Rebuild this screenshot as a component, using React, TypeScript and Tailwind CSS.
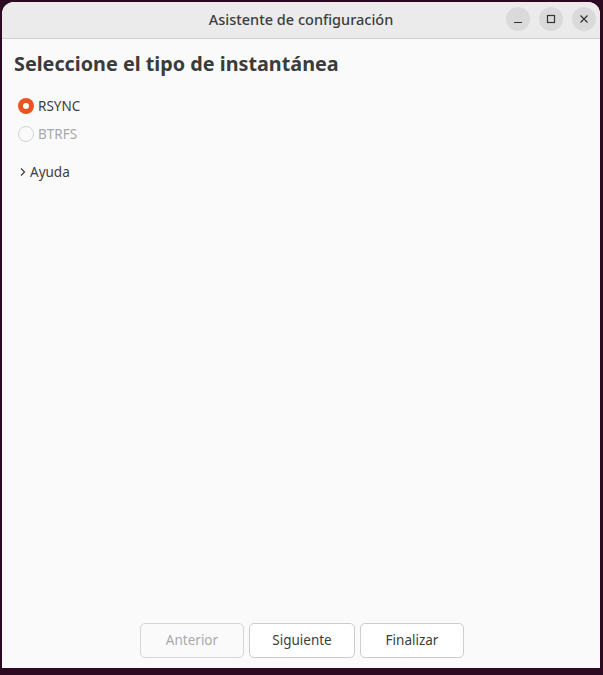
import { useState } from "react"

export default function App() {
  const [mode, setMode] = useState("rsync")

  return (
    <div className="w-[603px] h-[675px] bg-[#2c0a22] pt-[2px] pl-[2px] pr-[3px] pb-[7px] font-['Noto_Sans',sans-serif]">
      <div className="h-full flex flex-col bg-[#fafafa] rounded-t-[12px] overflow-hidden">
        {/* Title bar */}
        <div className="h-[37px] shrink-0 bg-[#ebebeb] border-b border-[#cfcfcf] flex items-center relative">
          <div className="flex-1 text-center text-[14.5px] text-[#3d3d3d] font-medium">Asistente de configuración</div>
          <div className="absolute right-[4px] top-[5px] flex gap-[9px]">
            <button className="w-[24px] h-[24px] rounded-full bg-[#dadada] flex items-center justify-center">
              <svg width="10" height="10" viewBox="0 0 10 10">
                <path d="M1 8.5h8" stroke="#333" strokeWidth="1.2" />
              </svg>
            </button>
            <button className="w-[24px] h-[24px] rounded-full bg-[#dadada] flex items-center justify-center">
              <svg width="10" height="10" viewBox="0 0 10 10">
                <rect x="1.5" y="1.5" width="7" height="7" fill="none" stroke="#333" strokeWidth="1.2" />
              </svg>
            </button>
            <button className="w-[24px] h-[24px] rounded-full bg-[#dadada] flex items-center justify-center">
              <svg width="10" height="10" viewBox="0 0 10 10">
                <path d="M1.5 1.5l7 7M8.5 1.5l-7 7" stroke="#333" strokeWidth="1.2" />
              </svg>
            </button>
          </div>
        </div>

        {/* Content */}
        <div className="flex-1 flex flex-col px-[12px] pt-[12px]">
          <h1 className="text-[19.8px] font-bold text-[#3b3b3b] leading-[26px]">Seleccione el tipo de instantánea</h1>

          <div className="mt-[19px] flex flex-col gap-[8px] pl-[4px]">
            <label className="flex items-center gap-[4px] cursor-pointer" onClick={() => setMode("rsync")}>
              <span
                className={
                  mode === "rsync"
                    ? "w-[16px] h-[16px] rounded-full bg-[#e95420] flex items-center justify-center"
                    : "w-[16px] h-[16px] rounded-full border border-[#c9c9c9] bg-white"
                }
              >
                {mode === "rsync" && <span className="w-[6px] h-[6px] rounded-full bg-white" />}
              </span>
              <span className="text-[13.5px] text-[#3d3d3d]">RSYNC</span>
            </label>
            <label className="flex items-center gap-[4px]">
              <span className="w-[16px] h-[16px] rounded-full border border-[#d4d4d4] bg-[#fafafa]" />
              <span className="text-[13.5px] text-[#a8a8a8]">BTRFS</span>
            </label>
          </div>

          <div className="mt-[17px] flex items-center gap-[3px] pl-[5px]">
            <svg width="8" height="10" viewBox="0 0 8 10">
              <path d="M2 1.5l3.5 3.5L2 8.5" fill="none" stroke="#3d3d3d" strokeWidth="1.2" />
            </svg>
            <span className="text-[13.5px] text-[#3d3d3d]">Ayuda</span>
          </div>

          {/* Buttons */}
          <div className="mt-auto mb-[10px] flex justify-center gap-[5px] pl-[2px]">
            <button className="w-[104px] h-[35px] rounded-[5px] border border-[#d6d6d6] bg-[#fafafa] text-[13.5px] text-[#aaaaaa]">
              Anterior
            </button>
            <button className="w-[106px] h-[35px] rounded-[5px] border border-[#cdcdcd] bg-white text-[13.5px] text-[#3d3d3d]">
              Siguiente
            </button>
            <button className="w-[104px] h-[35px] rounded-[5px] border border-[#cdcdcd] bg-white text-[13.5px] text-[#3d3d3d]">
              Finalizar
            </button>
          </div>
        </div>
      </div>
    </div>
  )
}
